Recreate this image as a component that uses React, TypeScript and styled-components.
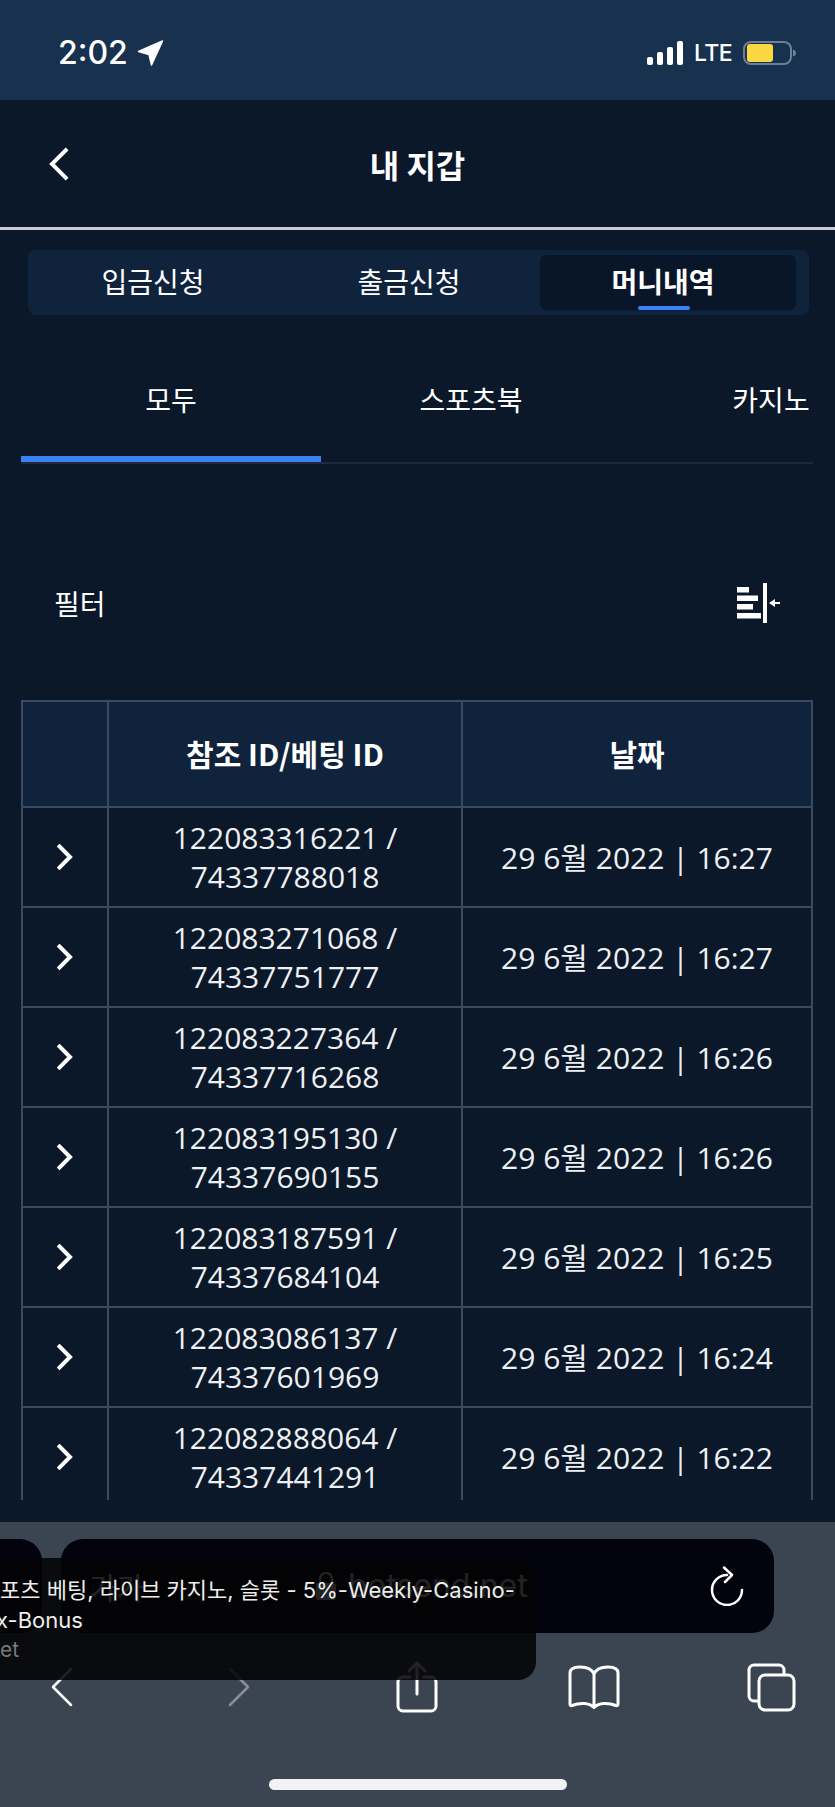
import { FC } from 'react';
import styled, { createGlobalStyle } from 'styled-components';

const GlobalStyle = createGlobalStyle`
  html, body {
    margin: 0;
    padding: 0;
    background: #0a1829;
  }
`;

const KR = `"Noto Sans CJK KR", "Open Sans", sans-serif`;

const Page = styled.div`
  width: 835px;
  height: 1807px;
  display: flex;
  flex-direction: column;
  overflow: hidden;
  position: relative;
  color: #fff;
  background: #0a1829;
  font-family: "Open Sans", "Noto Sans CJK KR", sans-serif;
`;

const StatusBar = styled.div`
  height: 100px;
  flex: none;
  box-sizing: border-box;
  padding: 28px 39px 0 58px;
  display: flex;
  align-items: flex-start;
  justify-content: space-between;
  background: #17314f;
`;

const Clock = styled.div`
  display: flex;
  align-items: center;
  gap: 9px;
  height: 50px;
  font: 500 32px/50px Inter, sans-serif;
`;

const StatusRight = styled.div`
  display: flex;
  align-items: center;
  gap: 11px;
  height: 50px;
`;

const Lte = styled.span`
  font: 500 23px/50px Inter, sans-serif;
  letter-spacing: -0.6px;
`;

const Header = styled.div`
  height: 127px;
  flex: none;
  box-sizing: border-box;
  padding-left: 48px;
  display: flex;
  align-items: center;
`;

const Title = styled.h1`
  flex: 1;
  margin: 1px 0 0;
  padding-right: 69px;
  text-align: center;
  font: 700 32px/40px ${KR};
`;

const Divider = styled.div`
  height: 3px;
  flex: none;
  background: #c9cbce;
`;

const WalletTabs = styled.div`
  margin: 20px 26px 0 28px;
  height: 65px;
  flex: none;
  box-sizing: border-box;
  padding: 5px 13px 5px 0;
  display: grid;
  grid-template-columns: 250px 262px 1fr;
  border-radius: 8px;
  background: #10233d;
`;

const WalletTab = styled.div<{ $active?: boolean }>`
  position: relative;
  display: flex;
  align-items: center;
  justify-content: center;
  padding-bottom: 4px;
  padding-right: ${({ $active }) => ($active ? '10px' : '0')};
  border-radius: 6px;
  font: ${({ $active }) => ($active ? 700 : 400)} 28px/40px ${KR};
  background: ${({ $active }) => ($active ? '#09162a' : 'transparent')};

  ${({ $active }) =>
    $active &&
    `&::after {
      content: '';
      position: absolute;
      left: 98px;
      bottom: 0;
      width: 52px;
      height: 4px;
      border-radius: 2px;
      background: #3b82f6;
    }`}
`;

const SubTabs = styled.div`
  margin: 0 22px 0 21px;
  height: 149px;
  flex: none;
  box-sizing: border-box;
  display: grid;
  grid-template-columns: repeat(3, 300px);
  overflow: hidden;
  border-bottom: 2px solid #1d2a3c;
`;

const SubTab = styled.div<{ $active?: boolean }>`
  box-sizing: border-box;
  height: 147px;
  padding-top: 64px;
  text-align: center;
  font: 400 28px/40px ${KR};
  border-bottom: 6px solid ${({ $active }) => ($active ? '#3b82f6' : 'transparent')};
`;

const FilterRow = styled.div`
  height: 236px;
  flex: none;
  box-sizing: border-box;
  padding: 41px 55px 0 54px;
  display: flex;
  align-items: center;
  justify-content: space-between;
  font: 400 28px/40px ${KR};
`;

const TableClip = styled.div`
  margin: 0 22px 0 21px;
  height: 800px;
  flex: none;
  overflow: hidden;
`;

const Table = styled.table`
  width: 792px;
  table-layout: fixed;
  border-collapse: collapse;
  border: 2px solid #3a4a60;
`;

const ChevronCol = styled.col`
  width: 86px;
`;

const IdCol = styled.col`
  width: 354px;
`;

const HeadCell = styled.th`
  height: 102px;
  padding: 0 0 2px;
  font: 700 30px/40px ${KR};
  text-align: center;
  background: #10233d;
  border: 2px solid #3a4a60;
`;

const Cell = styled.td`
  height: 98px;
  padding: 0;
  text-align: center;
  font-size: 30px;
  line-height: 39px;
  color: #eef0f3;
  border: 2px solid #3a4a60;
`;

const ChevronIcon = styled.svg`
  display: block;
  margin: 0 auto;
`;

const Browser = styled.div`
  flex: 1;
  margin-top: 22px;
  position: relative;
  background: #3a4551;
`;

const UrlRow = styled.div`
  margin-top: 17px;
  display: flex;
  gap: 19px;
  height: 94px;
`;

const PrevTab = styled.div`
  width: 42px;
  flex: none;
  border-radius: 0 22px 22px 0;
  background: #02030c;
`;

const UrlBar = styled.div`
  width: 713px;
  box-sizing: border-box;
  padding: 0 30px 0 28px;
  display: flex;
  align-items: center;
  border-radius: 22px;
  background: #02030c;
`;

const TextSize = styled.span`
  width: 227px;
  font: 400 30px/40px ${KR};
`;

const Host = styled.span`
  flex: 1;
  margin-left: 12px;
  font: 400 32px/40px Inter, sans-serif;
`;

const ToolRow = styled.div`
  margin-top: 28px;
  padding: 0 34px 0 32px;
  display: flex;
  align-items: center;
  justify-content: space-between;
`;

const ToolSlot = styled.div`
  width: 60px;
  display: flex;
  justify-content: center;
`;

const Tool = styled.svg<{ $dim?: boolean }>`
  display: block;
  opacity: ${({ $dim }) => ($dim ? 0.4 : 1)};
`;

const HomeBar = styled.div`
  position: absolute;
  left: 269px;
  bottom: 17px;
  width: 298px;
  height: 11px;
  border-radius: 6px;
  background: #f2f2f2;
`;

const Preview = styled.div`
  position: absolute;
  left: 0;
  top: 36px;
  width: 536px;
  height: 122px;
  box-sizing: border-box;
  padding-top: 17px;
  border-radius: 0 18px 18px 0;
  background: rgba(3, 3, 4, 0.88);
`;

const PreviewTitle = styled.div<{ $cut?: boolean }>`
  margin-left: ${({ $cut }) => ($cut ? '-4px' : '0')};
  font: 400 22px/30px Inter, "Noto Sans CJK KR", sans-serif;
  white-space: nowrap;
  color: #eceded;
`;

const PreviewHost = styled.div`
  margin-top: 2px;
  font: 400 21px/26px Inter, sans-serif;
  color: #77797c;
`;

const rows = [
  ['122083316221', '74337788018', '16:27'],
  ['122083271068', '74337751777', '16:27'],
  ['122083227364', '74337716268', '16:26'],
  ['122083195130', '74337690155', '16:26'],
  ['122083187591', '74337684104', '16:25'],
  ['122083086137', '74337601969', '16:24'],
  ['122082888064', '74337441291', '16:22'],
];

const Chevron: FC<{ flip?: boolean; width: number; height: number; weight: number }> = ({
  flip,
  width,
  height,
  weight,
}) => (
  <ChevronIcon width={width} height={height} viewBox="0 0 16 26" fill="none" preserveAspectRatio="none">
    <path
      d={flip ? 'M13.500 2.500 3 13l10.500 10.500' : 'M2.500 2.500 13 13 2.500 23.500'}
      stroke="#fff"
      strokeWidth={weight}
      strokeLinecap="square"
    />
  </ChevronIcon>
);

const App: FC = () => (
  <Page>
    <GlobalStyle />
    <StatusBar>
      <Clock>
        2:02
        <svg width="27" height="26" viewBox="0 0 27 26">
          <path d="M25.500 1 1.500 11.500 12 14.500 14.500 25z" fill="#fff" stroke="#fff" strokeWidth="1.500" strokeLinejoin="round" />
        </svg>
      </Clock>
      <StatusRight>
        <svg width="36" height="24" viewBox="0 0 36 24" fill="#fff">
          <rect x="0" y="16" width="6" height="8" rx="2" />
          <rect x="10" y="11" width="6" height="13" rx="2" />
          <rect x="20" y="6" width="6" height="18" rx="2" />
          <rect x="30" y="0" width="6" height="24" rx="2" />
        </svg>
        <Lte>LTE</Lte>
        <svg width="53" height="24" viewBox="0 0 53 24">
          <rect x="1" y="1" width="47" height="22" rx="7" fill="none" stroke="#6d7f95" strokeWidth="2" />
          <rect x="4" y="3" width="26" height="18" rx="3" fill="#fbd842" />
          <path d="M50 8.500q3 1 3 3.500t-3 3.500z" fill="#6d7f95" />
        </svg>
      </StatusRight>
    </StatusBar>

    <Header>
      <Chevron flip width={21} height={34} weight={3} />
      <Title>내 지갑</Title>
    </Header>
    <Divider />

    <WalletTabs>
      <WalletTab>입금신청</WalletTab>
      <WalletTab>출금신청</WalletTab>
      <WalletTab $active>머니내역</WalletTab>
    </WalletTabs>

    <SubTabs>
      <SubTab $active>모두</SubTab>
      <SubTab>스포츠북</SubTab>
      <SubTab>카지노</SubTab>
    </SubTabs>

    <FilterRow>
      <span>필터</span>
      <svg width="43" height="40" viewBox="0 0 43 40" fill="#fff">
        <rect x="0" y="4" width="12" height="5.500" />
        <rect x="0" y="12.500" width="21" height="5.500" />
        <rect x="0" y="21" width="16" height="5.500" />
        <rect x="0" y="30" width="24" height="5.500" />
        <rect x="26" y="0" width="4" height="40" />
        <path d="M32 20l6-4v3h5v2h-5v3z" />
      </svg>
    </FilterRow>

    <TableClip>
      <Table>
        <colgroup>
          <ChevronCol />
          <IdCol />
          <col />
        </colgroup>
        <thead>
          <tr>
            <HeadCell />
            <HeadCell>참조 ID/베팅 ID</HeadCell>
            <HeadCell>날짜</HeadCell>
          </tr>
        </thead>
        <tbody>
          {rows.map(([ref, bet, time]) => (
            <tr key={ref}>
              <Cell>
                <Chevron width={16} height={26} weight={4} />
              </Cell>
              <Cell>
                {ref} /
                <br />
                {bet}
              </Cell>
              <Cell>29 6월 2022 | {time}</Cell>
            </tr>
          ))}
        </tbody>
      </Table>
    </TableClip>

    <Browser>
      <UrlRow>
        <PrevTab />
        <UrlBar>
          <TextSize>가가</TextSize>
          <svg width="20" height="28" viewBox="0 0 20 28" fill="#fff">
            <rect x="0" y="11" width="20" height="17" rx="3" />
            <path d="M4 12V7a6 6 0 0 1 12 0v5" fill="none" stroke="#fff" strokeWidth="2.500" />
          </svg>
          <Host>betsend.net</Host>
          <svg width="34" height="40" viewBox="0 0 34 40" fill="none" stroke="#fff" strokeWidth="2.500" strokeLinecap="round" strokeLinejoin="round">
            <path d="M17 9A15 15 0 1 0 32 24" />
            <path d="M14 1.500l8 7.500-7 7" />
          </svg>
        </UrlBar>
      </UrlRow>
      <ToolRow>
        <ToolSlot>
          <Tool width="24" height="40" viewBox="0 0 24 40" fill="none" stroke="#fff" strokeWidth="2.500" strokeLinecap="round" strokeLinejoin="round">
            <path d="M21 2 3 20l18 18" />
          </Tool>
        </ToolSlot>
        <ToolSlot>
          <Tool $dim width="24" height="40" viewBox="0 0 24 40" fill="none" stroke="#fff" strokeWidth="2.500" strokeLinecap="round" strokeLinejoin="round">
            <path d="M3 2l18 18L3 38" />
          </Tool>
        </ToolSlot>
        <ToolSlot>
          <Tool width="42" height="52" viewBox="0 0 42 52" fill="none" stroke="#fff" strokeWidth="3" strokeLinecap="round" strokeLinejoin="round">
            <path d="M14 16H7a5 5 0 0 0-5 5v24a5 5 0 0 0 5 5h28a5 5 0 0 0 5-5V21a5 5 0 0 0-5-5h-7" />
            <path d="M21 33V2M13 10l8-8 8 8" />
          </Tool>
        </ToolSlot>
        <ToolSlot>
          <Tool width="52" height="44" viewBox="0 0 52 44" fill="none" stroke="#fff" strokeWidth="3" strokeLinecap="round" strokeLinejoin="round">
            <path d="M26 9C24 4 18 2 12 2 8 2 2 3 2 8v31c0 1.500 1 2 2 1.500 8-3 17-3 22 2 5-5 14-5 22-2 1 .5 2 0 2-1.500V8c0-5-6-6-10-6-6 0-12 2-14 7zM26 9v33" />
          </Tool>
        </ToolSlot>
        <ToolSlot>
          <Tool width="49" height="49" viewBox="0 0 49 49" fill="none" stroke="#fff" strokeWidth="3" strokeLinejoin="round">
            <path d="M37 11V7a5 5 0 0 0-5-5H7a5 5 0 0 0-5 5v26a5 5 0 0 0 5 5h4" />
            <rect x="12" y="12" width="35" height="35" rx="6" />
          </Tool>
        </ToolSlot>
      </ToolRow>
      <Preview>
        <PreviewTitle>포츠 베팅, 라이브 카지노, 슬롯 - 5%-Weekly-Casino-</PreviewTitle>
        <PreviewTitle $cut>x-Bonus</PreviewTitle>
        <PreviewHost>et</PreviewHost>
      </Preview>
      <HomeBar />
    </Browser>
  </Page>
);

export default App;
